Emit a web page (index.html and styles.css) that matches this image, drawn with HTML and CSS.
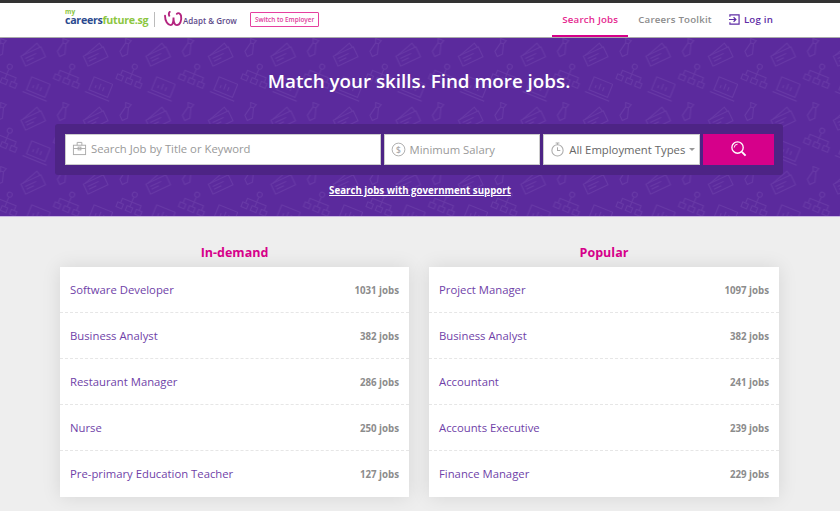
FILE: index.html
```html
<!DOCTYPE html>
<html lang="en">
<head>
    <meta charset="UTF-8">
    <meta name="viewport" content="width=device-width, initial-scale=1.0">
    <title>MyCareersFuture</title>
    <link rel="stylesheet" href="styles.css">
</head>
<body>

<!-- Top navigation -->
<header class="topbar">
    <div class="brand">
        <div class="logo-cf">
            <span class="logo-my">my</span>
            <span class="logo-name"><span class="logo-blue">careers</span><span class="logo-green">future.sg</span></span>
        </div>
        <div class="logo-divider"></div>
        <svg class="logo-ag" viewBox="0 0 20 17" width="19" height="16" fill="none" stroke="#b3247f" stroke-width="2" stroke-linecap="round">
            <path d="M1 5c0 6 3 10 6 10 2.500 0 3-4 3-8 0 4 1 8 3.500 8C17 15 19 10 18 5c-.5-2.500-3-3.500-4.500-2"/>
            <path d="M6 1c-1 1-1 3-.5 4"/>
        </svg>
        <span class="logo-ag-text">Adapt &amp; Grow</span>
        <a class="switch-btn" href="#">Switch to Employer</a>
    </div>
    <nav class="nav">
        <a class="nav-link active" href="#">Search Jobs</a>
        <a class="nav-link" href="#">Careers Toolkit</a>
        <a class="nav-link login" href="#">
            <svg viewBox="0 0 12 12" width="11" height="11" fill="none" stroke="#5e2ca5" stroke-width="1.300">
                <path d="M1 3V1h10v10H1V9"/>
                <path d="M0 6h7M5 3.500 7.500 6 5 8.500"/>
            </svg>
            Log in
        </a>
    </nav>
</header>

<!-- Hero with search -->
<section class="hero">
    <svg class="hero-pattern" width="100%" height="100%">
        <defs>
            <pattern id="icons" x="-12" y="0" width="62.500" height="64" patternUnits="userSpaceOnUse">
                <g fill="none" stroke="#7a4fb3" stroke-width="1" opacity="0.42">
                    <g transform="rotate(20 12 11)">
                        <path d="M9 1h6l-1.500 4h-3zM10.500 5 8 15l4 4 4-4-2.500-10"/>
                    </g>
                    <g transform="rotate(-25 45 18)">
                        <rect x="34" y="13" width="22" height="11"/>
                        <path d="M37 17h12M37 20h8M36 13l18-5 1 5"/>
                    </g>
                    <g transform="rotate(22 18 38)">
                        <circle cx="18" cy="28" r="2.500"/>
                        <path d="M18 31v5M8 41v-5h20v5M18 36v5"/>
                        <rect x="5" y="41" width="6" height="5"/>
                        <rect x="15" y="41" width="6" height="5"/>
                        <rect x="25" y="41" width="6" height="5"/>
                    </g>
                    <g transform="rotate(22 50 50)">
                        <rect x="40" y="42" width="20" height="14"/>
                        <path d="M37 59h26M45 52v-3M49 52v-6M53 52v-4"/>
                    </g>
                </g>
            </pattern>
        </defs>
        <rect width="100%" height="100%" fill="url(#icons)"/>
    </svg>
    <h1 class="hero-title">Match your skills. Find more jobs.</h1>
    <div class="search-panel">
        <div class="field field-keyword">
            <svg viewBox="0 0 16 16" width="15" height="15" fill="none" stroke="#aaa" stroke-width="1">
                <rect x="1.500" y="4.500" width="13" height="10"/>
                <path d="M5.500 4.500v-3h5v3M1.500 8h13"/>
                <rect x="6.500" y="6.500" width="3" height="3"/>
            </svg>
            <span>Search Job by Title or Keyword</span>
        </div>
        <div class="field field-salary">
            <svg viewBox="0 0 16 16" width="15" height="15" fill="none" stroke="#aaa" stroke-width="1">
                <circle cx="8" cy="8" r="6.800"/>
                <text x="8" y="11.200" class="dollar">$</text>
            </svg>
            <span>Minimum Salary</span>
        </div>
        <div class="field field-type">
            <svg viewBox="0 0 16 16" width="15" height="15" fill="none" stroke="#aaa" stroke-width="1.100">
                <circle cx="8" cy="9" r="6"/>
                <path d="M8 5.500V9h3M6 1h4M8 1v2"/>
            </svg>
            <span>All Employment Types</span>
            <i class="caret"></i>
        </div>
        <button class="search-btn">
            <svg viewBox="0 0 18 18" width="17" height="17" fill="none" stroke="#fff" stroke-width="1.400">
                <circle cx="8" cy="8" r="6"/>
                <path d="M12.500 12.500 16.500 16.500" stroke-width="2"/>
                <path d="M4.500 8a3.500 3.500 0 0 1 3.500-3.500" stroke-width="1"/>
            </svg>
        </button>
    </div>
    <a class="gov-link" href="#">Search jobs with government support</a>
</section>

<!-- Job lists -->
<main class="lists">
    <section class="list-col">
        <h2>In-demand</h2>
        <ul class="job-card">
            <li><a href="#">Software Developer</a><span>1031 jobs</span></li>
            <li><a href="#">Business Analyst</a><span>382 jobs</span></li>
            <li><a href="#">Restaurant Manager</a><span>286 jobs</span></li>
            <li><a href="#">Nurse</a><span>250 jobs</span></li>
            <li><a href="#">Pre-primary Education Teacher</a><span>127 jobs</span></li>
        </ul>
    </section>
    <section class="list-col">
        <h2>Popular</h2>
        <ul class="job-card">
            <li><a href="#">Project Manager</a><span>1097 jobs</span></li>
            <li><a href="#">Business Analyst</a><span>382 jobs</span></li>
            <li><a href="#">Accountant</a><span>241 jobs</span></li>
            <li><a href="#">Accounts Executive</a><span>239 jobs</span></li>
            <li><a href="#">Finance Manager</a><span>229 jobs</span></li>
        </ul>
    </section>
</main>

</body>
</html>
```

FILE: styles.css
```css
html, body { height: 100%; }
body { margin: 0; height: 511px; overflow: hidden; font-family: "Open Sans", Arial, sans-serif; background-color: #eeeeee; }
a { text-decoration: none; }

/* Top navigation */
.topbar { display: flex; justify-content: space-between; height: 34px; border-top: 3px solid #333; background-color: #fff; border-bottom: 1px solid #aaa; padding: 0 67px 0 65px; box-sizing: content-box; }
.brand { display: flex; align-items: center; padding-bottom: 2px; }
.logo-cf { display: flex; flex-direction: column; width: 84px; padding-bottom: 3px; }
.logo-my { font-size: 6.500px; line-height: 5px; font-weight: 700; color: #8cc63f; margin-bottom: 1px; }
.logo-name { font-size: 10.700px; line-height: 11px; font-weight: 700; letter-spacing: -0.300px; white-space: nowrap; }
.logo-blue { color: #2b4a8f; }
.logo-green { color: #8cc63f; }
.logo-divider { width: 1px; height: 15px; background-color: #bbb; margin: 0 9px 0 5px; }
.logo-ag { margin-right: 1px; }
.logo-ag-text { font-size: 8px; font-weight: 600; color: #5d4a8a; width: 54px; margin-left: -1px; white-space: nowrap; padding-top: 2px; }
.switch-btn { margin-left: 13px; border: 1px solid #e5409f; border-radius: 1px; color: #e0399b; font-size: 6.400px; font-weight: 600; line-height: 13px; padding: 0 4px; white-space: nowrap; }
.nav { display: flex; align-items: stretch; }
.nav-link { display: flex; align-items: center; gap: 5px; font-size: 9.700px; font-weight: 600; letter-spacing: 0.200px; color: #8c8c8c; padding: 0 10px 1px; height: 34px; box-sizing: border-box; }
.nav-link.active { color: #e5278f; border-bottom: 2px solid #d6008a; padding-bottom: 0; }
.nav-link.login { color: #5e2ca5; gap: 4px; padding: 0 0 1px 7px; }

/* Hero */
.hero { position: relative; height: 179px; box-sizing: border-box; background-color: #5b2a9d; border-bottom: 1px solid #c9b6e4; text-align: center; }
.hero-pattern { position: absolute; top: 0; left: 0; }
.hero-title { position: relative; margin: 0; padding: 29px 2px 0 0; font-size: 18.800px; line-height: 29px; font-weight: 600; color: #fff; }
.search-panel { position: relative; display: flex; width: 709px; height: 31px; margin: 28px 0 0 55px; padding: 10px 9px 10px 10px; background-color: #4d2485; border-radius: 3px; gap: 3px; }
.field { display: flex; align-items: center; gap: 3px; box-sizing: border-box; height: 31px; padding-left: 6px; background-color: #fff; border: 1px solid #ccc; font-size: 11.300px; color: #999; white-space: nowrap; }
.field-keyword { width: 316px; padding-bottom: 2px; gap: 4px; }
.field-salary { width: 157px; gap: 4px; }
.field-type { width: 157px; color: #666; gap: 4px; }
.caret { width: 0; height: 0; border-left: 3px solid transparent; border-right: 3px solid transparent; border-top: 3px solid #999; }
.dollar { font-size: 9px; fill: #aaa; stroke: none; text-anchor: middle; font-weight: 600; }
.search-btn { width: 71px; height: 31px; border: none; background-color: #d6008a; cursor: pointer; padding: 0; }
.gov-link { position: relative; display: inline-block; margin-top: 9px; font-size: 9.700px; line-height: 14px; font-weight: 700; color: #fff; text-decoration: underline; }

/* Job lists */
.lists { display: grid; grid-template-columns: 349px 350px; gap: 20px; padding: 0 0 0 60px; }
.list-col h2 { margin: 0; padding: 27px 0 6px; font-size: 12.500px; line-height: 17px; font-weight: 700; text-align: center; color: #d6008a; }
.job-card { margin: 0; padding: 0; list-style: none; background-color: #fff; box-shadow: 0 0 18px rgba(0, 0, 0, 0.1); }
.job-card li { display: flex; justify-content: space-between; align-items: center; height: 46px; box-sizing: border-box; padding: 0 10px; border-bottom: 1px dashed #e6e6e6; }
.job-card li:last-child { border-bottom-color: transparent; }
.job-card a { font-size: 11.300px; color: #6f3fa8; }
.job-card span { font-size: 9.700px; font-weight: 700; color: #8c8c8c; padding-top: 2px; }
```
